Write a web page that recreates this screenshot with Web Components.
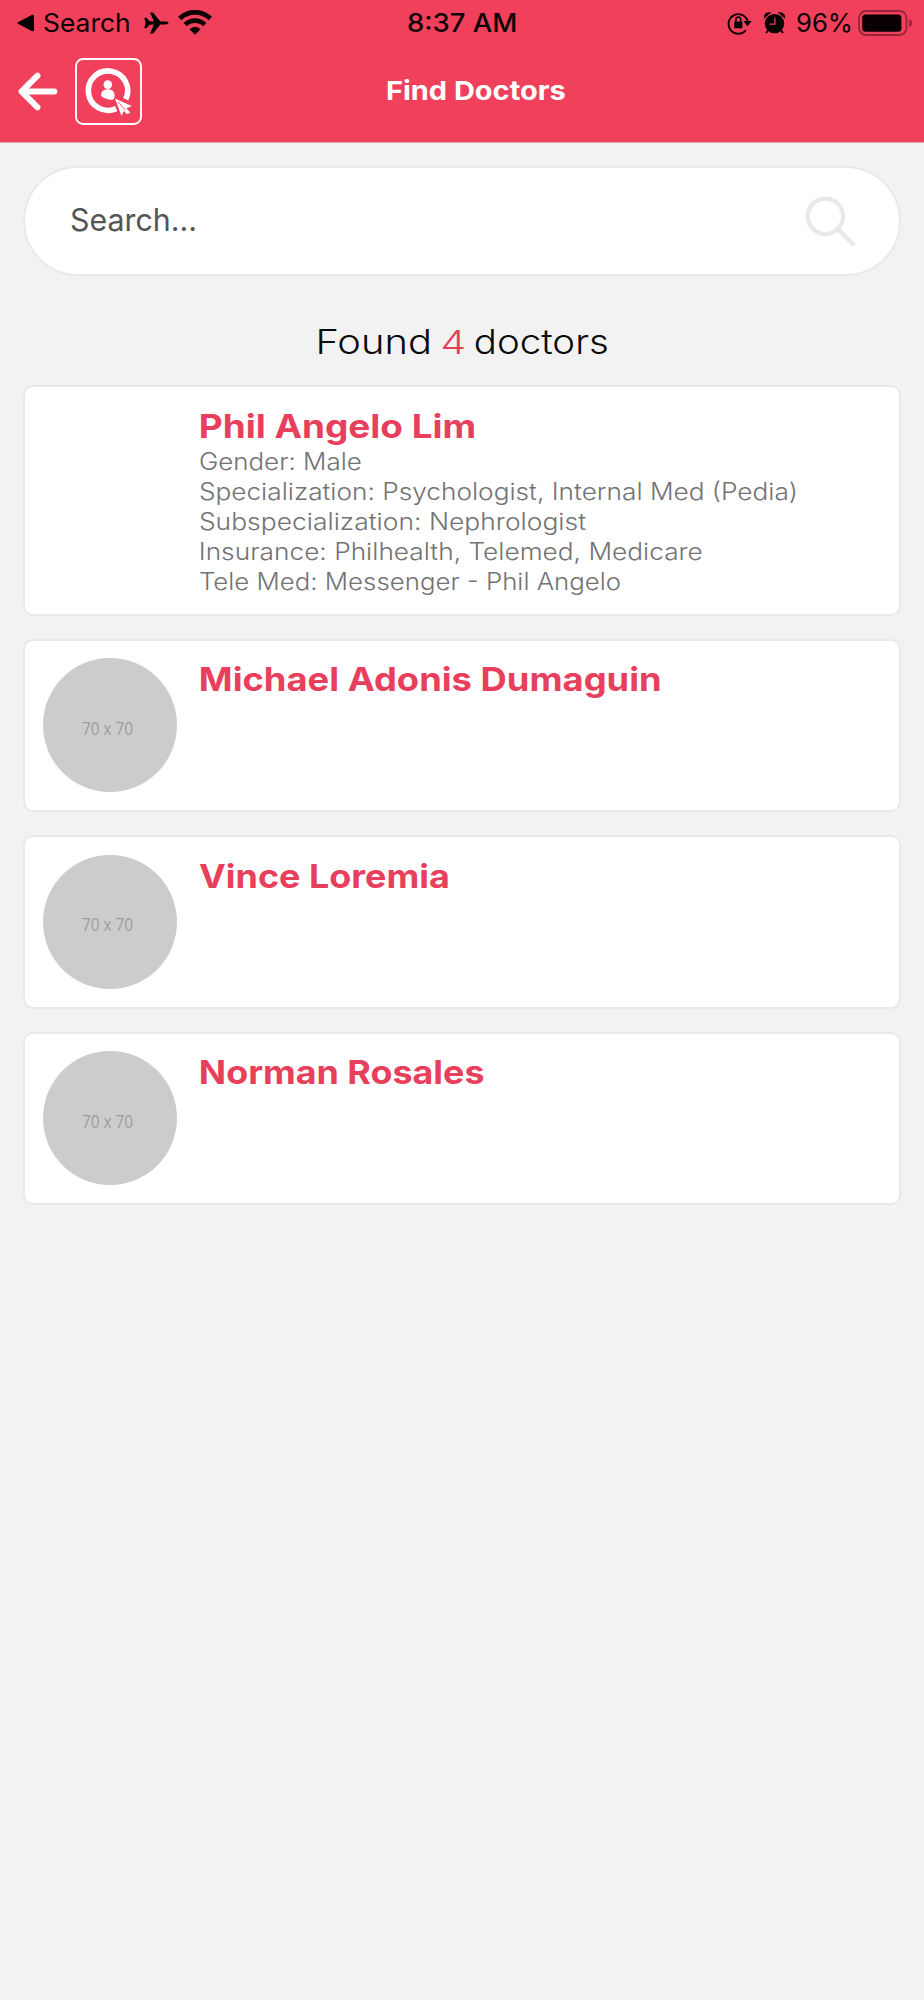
<!DOCTYPE html>
<html lang="en">
<head>
<meta charset="utf-8">
<title>Find Doctors</title>
<style>
body{margin:0;background:#f2f2f2;font-family:Inter,"Liberation Sans",sans-serif}
</style>
</head>
<body>
<doctor-app></doctor-app>
<script>
const define=(name,html,init)=>customElements.define(name,class extends HTMLElement{
  constructor(){super();this.attachShadow({mode:'open'}).innerHTML=html;}
  connectedCallback(){if(init)init(this,this.shadowRoot);}
});

/* One line of text whose ink spans exactly `w` pixels, starting at the host's left edge. */
customElements.define('fit-text',class extends HTMLElement{
  constructor(){
    super();
    this.attachShadow({mode:'open'}).innerHTML=`<style>
      :host{display:block;flex:none;white-space:pre}
      span{display:inline-block;transform-origin:0 50%;line-height:inherit}
    </style><span></span>`;
  }
  connectedCallback(){
    const s=this.shadowRoot.querySelector('span'),t=this.getAttribute('text'),w=+this.getAttribute('w');
    s.textContent=t;
    const cs=getComputedStyle(this),c=document.createElement('canvas').getContext('2d');
    c.font=`${cs.fontWeight} ${cs.fontSize} ${cs.fontFamily}`;
    const m=c.measureText(t),ink=m.actualBoundingBoxRight+m.actualBoundingBoxLeft,k=w/ink;
    this.style.width=w+'px';
    s.style.transform=`translateX(${m.actualBoundingBoxLeft*k}px) scaleX(${k})`;
  }
});

define('status-bar',`<style>
  :host{display:grid;grid-template-columns:1fr auto 1fr;height:46px;line-height:46px;font-size:25.5px;color:#0c0204}
  div{display:flex;align-items:center}
  .l{padding-left:17px}.r{justify-content:flex-end;padding-right:11px}
  svg{display:block;flex:none}
  .time{font-weight:500}
</style>
<div class="l">
  <svg width="17" height="18" viewBox="0 0 17 18"><path d="M1 8.2 14.8.9Q17 0 17 2.2V15.8Q17 18 14.8 17.1L1 9.8Q-.3 9 1 8.2Z"/></svg>
  <fit-text text="Search" w="85.5" style="margin-left:10px"></fit-text>
  <svg width="25" height="22" viewBox="0 0 25 22" style="margin-left:14px"><path d="M.3 5.8h2L5.7 9.2 10 9.5 6 .6h3l7.3 8.8h5.3q3 .3 3 1.6t-3 1.6h-5.3L9 21.4H6l4-8.9-4.3.3-3.4 3.4h-2L1.6 11Z"/></svg>
  <svg width="34" height="25" viewBox="0 0 34 25" style="margin-left:9px;margin-top:-1px"><g fill="none" stroke="#0c0204" stroke-width="4.7"><path d="M1.7 8.5A22 22 0 0 1 32.3 8.5"/><path d="M7.2 14.6A14 14 0 0 1 26.8 14.6"/></g><path d="M11.5 19.3Q17 14.2 22.5 19.3L17 24.7Z"/></svg>
</div>
<fit-text class="time" text="8:37 AM" w="108"></fit-text>
<div class="r">
  <svg width="25" height="24" viewBox="0 0 25 24"><path d="M18.9 19.2A9.8 9.8 0 1 1 20.7 10" fill="none" stroke="#0c0204" stroke-width="1.9"/><path d="M16.6 10h7.9l-4 5.4ZM7.3 10.4h8v6.8h-8Z"/><path d="M8.9 11V8.7q0-2.6 2.4-2.6t2.4 2.6V11" fill="none" stroke="#0c0204" stroke-width="1.5"/></svg>
  <svg width="21" height="22" viewBox="0 0 21 22" style="margin-left:12.5px"><circle cx="10.5" cy="11.6" r="9.7"/><path d="M.5 5.5Q.7.7 5.8.9ZM20.5 5.5Q20.3.7 15.2.9Z" stroke="#0c0204" stroke-width="1.3"/><path d="m5 17-3 4M16 17l3 4" stroke="#0c0204" stroke-width="2"/><path d="M10.9 5.8v6.4H5.4" fill="none" stroke="#ee405b" stroke-width="1.3"/></svg>
  <fit-text text="96%" w="54" style="margin-left:12px"></fit-text>
  <svg width="55" height="26" viewBox="0 0 55 26" style="margin-left:7px;margin-top:-1px"><rect x="1" y="1" width="47.5" height="24" rx="7" fill="none" stroke="#952539" stroke-width="1.8"/><rect x="4.2" y="4.4" width="39.2" height="17.3" rx="3.5" fill="#080002"/><path d="M51.2 9.2Q54 10 54 13t-2.8 4Z" fill="#952539"/></svg>
</div>`);

define('nav-bar',`<style>
  :host{display:grid;grid-template-columns:1fr auto 1fr;align-items:center;height:91px;color:#fff;line-height:34px;font-size:26.3px;font-weight:700}
  div{display:flex;align-items:center;padding-left:18px;gap:17px}
  svg{display:block}
  fit-text{margin:0 0 2px 28px}
</style>
<div>
  <svg width="40" height="39" viewBox="0 0 40 39" fill="none" stroke="#fff" stroke-width="6" stroke-linecap="round" stroke-linejoin="round"><path d="M36.3 19.5H5M19.5 3.7 3.6 19.5 19.5 35.3"/></svg>
  <svg width="67" height="67" viewBox="0 0 67 67" fill="#fff"><rect x="1" y="1" width="65" height="65" rx="7" fill="none" stroke="#fff" stroke-width="1.9"/>
    <path d="M41.2 50.6A19.7 19.7 0 1 1 50.8 41.2" fill="none" stroke="#fff" stroke-width="5.6"/>
    <circle cx="32.8" cy="26.6" r="4.3"/><path d="M26 37.4q0-6.2 6.8-6.2t6.8 6.2-6.8 3.8-6.8-3.8Z"/>
    <path d="m40 40.5 16.8 7.5-5.3 2.2 3.8 4.6-3.4 1.5-3-3.2-2.4 5Z"/><path d="m43 43.5 7.3 8.8" stroke="#f0405b" stroke-width=".8" fill="none"/></svg>
</div>
<fit-text text="Find Doctors" w="178"></fit-text>`);

define('app-header',`<style>:host{display:block;height:143px;background:#f0405b;border-bottom:1px solid #e3a0ab;box-sizing:border-box}</style><slot></slot>`);

define('search-box',`<style>
  :host{display:flex;justify-content:space-between;align-items:center;box-sizing:border-box;height:110.5px;margin:22.5px 23px 0;padding:0 43px 0 45.5px;border:2px solid #e9e9e9;border-radius:56px;background:#fff;font-size:31px;line-height:60px;color:#555}
  fit-text{margin-top:-1px}
  svg{display:block;margin-top:1px}
</style>
<fit-text text="Search..." w="124"></fit-text>
<svg width="51" height="51" viewBox="0 0 51 51" fill="none" stroke="#e9e9e9" stroke-width="4.3"><circle cx="20.4" cy="20.3" r="17.7"/><path d="m33 33 16.3 16.4"/></svg>`);

define('result-count',`<style>
  :host{display:flex;height:60px;margin-top:36px;padding-left:319px;font-size:34px;font-weight:300;line-height:60px;color:#0b0b0b}
  .n{color:#e5405b;margin:0 11px 0 14px;font-size:33px}
</style>
<fit-text text="Found" w="110"></fit-text><fit-text class="n" text="4" w="21"></fit-text><fit-text text="doctors" w="132"></fit-text>`);

define('avatar-placeholder',`<style>
  :host{display:flex;justify-content:center;box-sizing:border-box;width:134px;height:134px;border-radius:50%;background:#ccc;color:#9c9c9c;font:17.5px/20px "Open Sans",sans-serif;padding-top:59.5px}
  fit-text{margin-right:4px}
</style><fit-text text="70 x 70" w="51"></fit-text>`);

define('doctor-card',`<style>
  :host{display:grid;grid-template-columns:134px 1fr;column-gap:24.5px;box-sizing:border-box;height:173.5px;margin:0 23px 23px;padding:17.7px 17.5px 0 17.5px;border:2px solid #e9e9e9;border-radius:10px;background:#fff}
  :host([tall]){height:230.5px}
  .info{display:flex;flex-direction:column;align-items:flex-start}
  .name{font-size:33px;font-weight:700;line-height:42px;color:#e8405c}
  ::slotted(fit-text){font-size:23.7px;font-weight:300;line-height:30px;color:#737373}
</style>
<div class="photo"></div><div class="info"></div>`,(h,r)=>{
  if(!h.hasAttribute('tall'))r.querySelector('.photo').innerHTML='<avatar-placeholder></avatar-placeholder>';
  r.querySelector('.info').innerHTML=`<fit-text class="name" text="${h.getAttribute('name')}" w="${h.getAttribute('w')}" style="margin-left:${h.getAttribute('dx')||0}px"></fit-text><slot></slot>`;
});

define('doctor-app',`<style>:host{display:block;min-height:2000px;background:#f2f2f2}main{display:flow-root}
.list{margin-top:13px}
fit-text{font-size:23.7px;font-weight:300}</style>
<app-header><status-bar></status-bar><nav-bar></nav-bar></app-header>
<main><search-box></search-box><result-count></result-count>
<div class="list">
<doctor-card tall name="Phil Angelo Lim" w="274" dx="0.3">
  <fit-text text="Gender: Male" w="161" style="margin-left:-1px"></fit-text>
  <fit-text text="Specialization: Psychologist, Internal Med (Pedia)" w="595.5" style="margin-left:-1.4px"></fit-text>
  <fit-text text="Subspecialization: Nephrologist" w="386" style="margin-left:-1.4px"></fit-text>
  <fit-text text="Insurance: Philhealth, Telemed, Medicare" w="501"></fit-text>
  <fit-text text="Tele Med: Messenger - Phil Angelo" w="420" style="margin-left:-1.5px"></fit-text>
</doctor-card>
<doctor-card name="Michael Adonis Dumaguin" w="459" dx="0.3"></doctor-card>
<doctor-card name="Vince Loremia" w="249.5" dx="-2.5"></doctor-card>
<doctor-card name="Norman Rosales" w="283" dx="0.3"></doctor-card>
</div></main>`);
</script>
</body>
</html>
